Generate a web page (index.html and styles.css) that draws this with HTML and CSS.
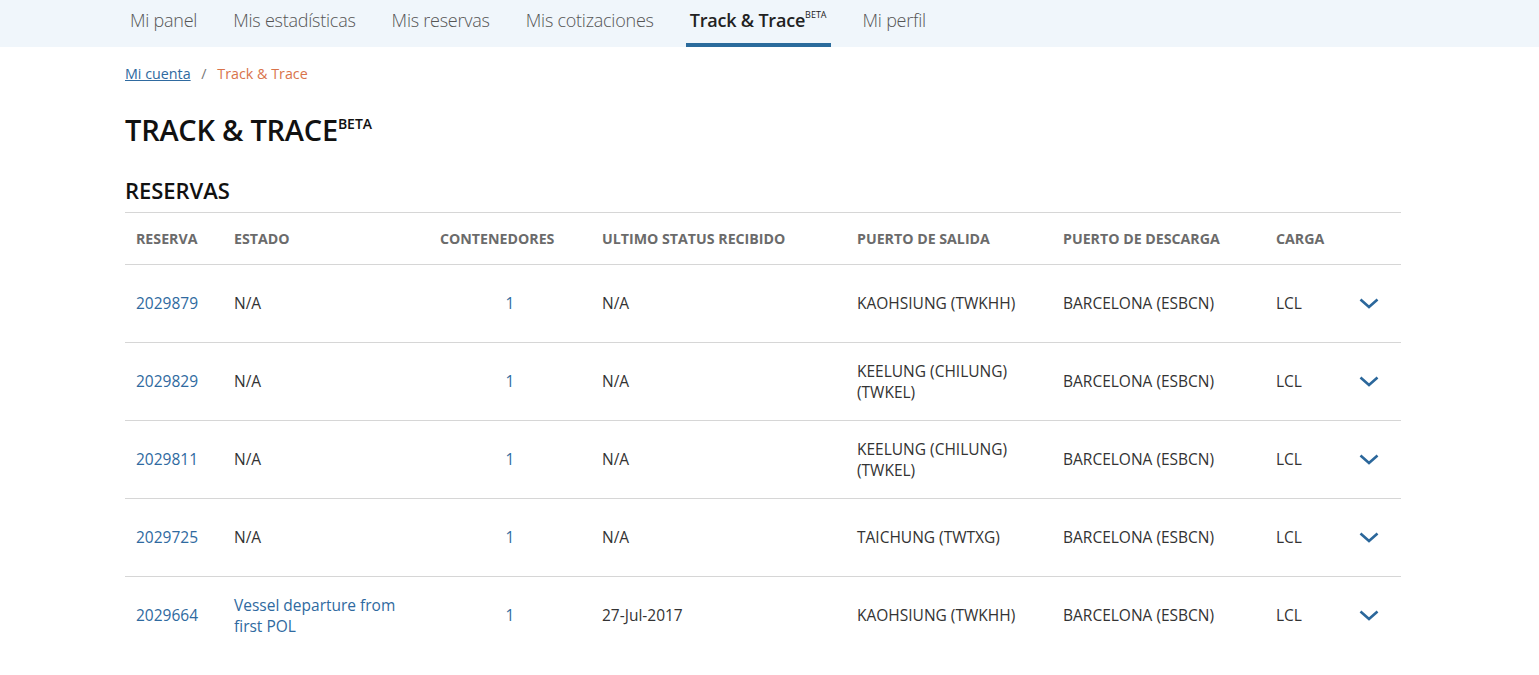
FILE: index.html
```html
<!DOCTYPE html>
<html lang="es">
<head>
<meta charset="utf-8">
<title>Track &amp; Trace</title>
<link rel="stylesheet" href="styles.css">
</head>
<body>
<nav class="topnav">
  <ul class="topnav-list">
    <li class="topnav-item"><a href="#">Mi panel</a></li>
    <li class="topnav-item"><a href="#">Mis estadísticas</a></li>
    <li class="topnav-item"><a href="#">Mis reservas</a></li>
    <li class="topnav-item"><a href="#">Mis cotizaciones</a></li>
    <li class="topnav-item active"><a href="#">Track &amp; Trace<sup>BETA</sup></a></li>
    <li class="topnav-item"><a href="#">Mi perfil</a></li>
  </ul>
</nav>
<main class="container">
  <div class="breadcrumb">
    <a href="#" class="crumb-link">Mi cuenta</a>
    <span class="crumb-sep">/</span>
    <span class="crumb-current">Track &amp; Trace</span>
  </div>
  <h1 class="page-title">TRACK &amp; TRACE<sup>BETA</sup></h1>
  <h2 class="section-title">RESERVAS</h2>
  <table class="bookings">
    <colgroup>
      <col class="c-res"><col class="c-est"><col class="c-cont"><col class="c-ult"><col class="c-sal"><col class="c-des"><col class="c-car"><col class="c-arr">
    </colgroup>
    <thead>
      <tr>
        <th>RESERVA</th><th>ESTADO</th><th>CONTENEDORES</th><th>ULTIMO STATUS RECIBIDO</th><th>PUERTO DE SALIDA</th><th>PUERTO DE DESCARGA</th><th>CARGA</th><th></th>
      </tr>
    </thead>
    <tbody>
      <tr>
        <td><a href="#" class="link">2029879</a></td><td>N/A</td><td class="center"><a href="#" class="link">1</a></td><td>N/A</td><td>KAOHSIUNG (TWKHH)</td><td>BARCELONA (ESBCN)</td><td>LCL</td>
        <td class="arrow"><svg width="20" height="11" viewBox="0 0 20 11"><path d="M1.5 1.5 L10 9 L18.5 1.5" fill="none" stroke="#2b679b" stroke-width="2.6"/></svg></td>
      </tr>
      <tr>
        <td><a href="#" class="link">2029829</a></td><td>N/A</td><td class="center"><a href="#" class="link">1</a></td><td>N/A</td><td>KEELUNG (CHILUNG)<br>(TWKEL)</td><td>BARCELONA (ESBCN)</td><td>LCL</td>
        <td class="arrow"><svg width="20" height="11" viewBox="0 0 20 11"><path d="M1.5 1.5 L10 9 L18.5 1.5" fill="none" stroke="#2b679b" stroke-width="2.6"/></svg></td>
      </tr>
      <tr>
        <td><a href="#" class="link">2029811</a></td><td>N/A</td><td class="center"><a href="#" class="link">1</a></td><td>N/A</td><td>KEELUNG (CHILUNG)<br>(TWKEL)</td><td>BARCELONA (ESBCN)</td><td>LCL</td>
        <td class="arrow"><svg width="20" height="11" viewBox="0 0 20 11"><path d="M1.5 1.5 L10 9 L18.5 1.5" fill="none" stroke="#2b679b" stroke-width="2.6"/></svg></td>
      </tr>
      <tr>
        <td><a href="#" class="link">2029725</a></td><td>N/A</td><td class="center"><a href="#" class="link">1</a></td><td>N/A</td><td>TAICHUNG (TWTXG)</td><td>BARCELONA (ESBCN)</td><td>LCL</td>
        <td class="arrow"><svg width="20" height="11" viewBox="0 0 20 11"><path d="M1.5 1.5 L10 9 L18.5 1.5" fill="none" stroke="#2b679b" stroke-width="2.6"/></svg></td>
      </tr>
      <tr>
        <td><a href="#" class="link">2029664</a></td><td><a href="#" class="link">Vessel departure from<br>first POL</a></td><td class="center"><a href="#" class="link">1</a></td><td>27-Jul-2017</td><td>KAOHSIUNG (TWKHH)</td><td>BARCELONA (ESBCN)</td><td>LCL</td>
        <td class="arrow"><svg width="20" height="11" viewBox="0 0 20 11"><path d="M1.5 1.5 L10 9 L18.5 1.5" fill="none" stroke="#2b679b" stroke-width="2.6"/></svg></td>
      </tr>
    </tbody>
  </table>
</main>
</body>
</html>
```

FILE: styles.css
```css
* { box-sizing: border-box; }
html, body { margin: 0; padding: 0; }
body {
  font-family: "Open Sans", "Liberation Sans", sans-serif;
  color: #333;
  background: #fff;
  font-size: 15.5px;
}
a { text-decoration: none; }

.topnav {
  background: #f0f6fb;
  height: 47px;
}
.topnav-list {
  list-style: none;
  margin: 0;
  padding: 0 0 0 126px;
  display: flex;
  height: 47px;
  gap: 28px;
}
.topnav-item {
  height: 47px;
  border-bottom: 4px solid transparent;
  padding: 0 4px;
}
.topnav-item a {
  display: block;
  font-size: 18px;
  font-weight: 300;
  color: #555;
  line-height: 41px;
  letter-spacing: -0.24px;
  white-space: nowrap;
}
.topnav-item.active { border-bottom-color: #2b6b9c; }
.topnav-item.active a {
  font-weight: 600;
  color: #222;
  letter-spacing: -0.2px;
}
.topnav-item sup {
  font-size: 9px;
  vertical-align: top;
  line-height: 30px;
  font-weight: 400;
  letter-spacing: 0;
}

.container {
  padding: 0 138px 0 125px;
}
.breadcrumb {
  padding-top: 17px;
  font-size: 14.3px;
  line-height: 20px;
}
.crumb-link {
  color: #2f6aa0;
  text-decoration: underline;
}
.crumb-sep {
  color: #777;
  margin: 0 7px 0 7px;
}
.crumb-current { color: #d9734a; }

.page-title {
  margin: 26px 0 0;
  font-size: 29px;
  font-weight: 600;
  color: #111;
  line-height: 40px;
  letter-spacing: -0.25px;
}
.page-title sup {
  font-size: 14px;
  font-weight: 600;
  vertical-align: top;
  line-height: 28px;
  letter-spacing: 0;
}
.section-title {
  margin: 26px 0 0;
  font-size: 22px;
  font-weight: 600;
  color: #111;
  line-height: 28px;
  letter-spacing: -0.05px;
}

.bookings {
  width: 1276px;
  border-collapse: collapse;
  table-layout: fixed;
  margin-top: 8px;
  border-top: 1px solid #d6d6d6;
}
.c-res { width: 98px; }
.c-est { width: 206px; }
.c-cont { width: 162px; }
.c-ult { width: 255px; }
.c-sal { width: 206px; }
.c-des { width: 213px; }
.c-car { width: 74px; }
.c-arr { width: 62px; }

.bookings th {
  text-align: left;
  font-size: 14.2px;
  font-weight: 700;
  color: #6b6b6b;
  height: 52px;
  padding: 0 11px;
  border-bottom: 1px solid #d6d6d6;
  white-space: nowrap;
}
.bookings td {
  height: 78px;
  padding: 0 11px;
  border-bottom: 1px solid #d6d6d6;
  font-size: 15.5px;
  line-height: 21px;
  color: #333;
  vertical-align: middle;
}
.bookings tbody tr:last-child td { border-bottom: none; }
.bookings td.center { text-align: center; }
.bookings td.arrow {
  text-align: left;
  padding-left: 20px;
  padding-right: 0;
}
.bookings td.arrow svg { display: block; }
.link { color: #2f6aa0; }
```
